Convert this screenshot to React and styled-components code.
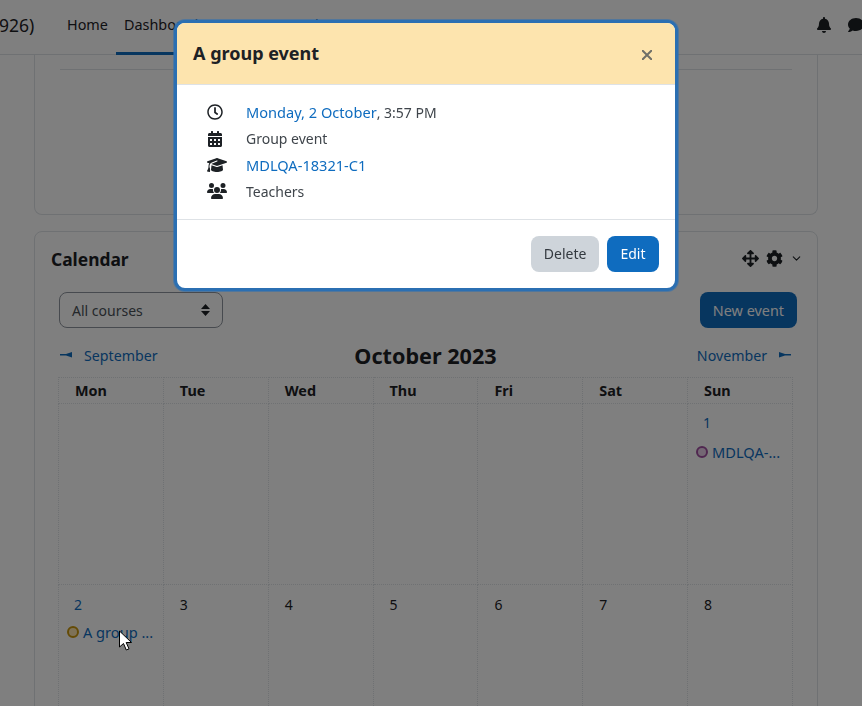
import React from "react";
import styled, { createGlobalStyle } from "styled-components";
import { FaRegClock, FaCalendarAlt, FaBell, FaComment, FaCog, FaArrowsAlt } from "react-icons/fa";
import { FaGraduationCap, FaUsers } from "react-icons/fa6";
import { ChevronDown } from "lucide-react";

const Global = createGlobalStyle`
  html, body {
    margin: 0;
    height: 100%;
    overflow: hidden;
    background: #fff;
  }
  body {
    font-family: "Noto Sans", "Open Sans", sans-serif;
    font-size: 14px;
    color: #1d2125;
  }
  * {
    box-sizing: border-box;
  }
`;

const Page = styled.div`
  height: 706px;
  overflow: hidden;
`;

const Navbar = styled.nav`
  height: 55px;
  box-shadow: inset 0 -1px #dee2e6;
  display: flex;
  align-items: flex-start;
  overflow: hidden;
  white-space: nowrap;
`;
const Brand = styled.span`
  font-size: 17.5px;
  line-height: 50px;
  margin-left: -1px;
  width: 60px;
`;
const NavLink = styled.a`
  padding: 0 8px;
  font-size: 14.4px;
  line-height: 50px;
  height: 55px;
  border-bottom: 3px solid ${(p) => (p.$active ? "#0f6cbf" : "transparent")};
`;
const NavIcons = styled.div`
  margin-left: auto;
  display: flex;
  align-items: center;
  gap: 16px;
  height: 50px;
  margin-right: -2px;
  font-size: 16px;
`;

const Main = styled.main`
  padding: 0 44px 0 34px;
  display: flex;
  flex-direction: column;
  gap: 16px;
`;
const TopCard = styled.section`
  height: 160px;
  border: 1px solid #dee2e6;
  border-top: 0;
  border-radius: 0 0 8px 8px;
  padding: 14px 25px 0;
`;
const Rule = styled.hr`
  margin: 0;
  border: 0;
  border-top: 1px solid #dee2e6;
`;
const Card = styled.section`
  border: 1px solid #dee2e6;
  border-radius: 8px;
  padding: 16px 16px 0;
  height: 600px;
`;
const CardHead = styled.div`
  display: flex;
  align-items: center;
  justify-content: space-between;
  height: 21px;
`;
const CardTitle = styled.h2`
  margin: 0;
  font-size: 17.4px;
  font-weight: 700;
`;
const Tools = styled.div`
  display: flex;
  align-items: center;
  gap: 7px;
  margin-right: -2px;
  font-size: 17px;
`;
const Controls = styled.div`
  margin: 23px 4px 0 8px;
  display: flex;
  justify-content: space-between;
`;
const Select = styled.div`
  width: 164px;
  height: 36px;
  border: 1px solid #8f959e;
  border-radius: 8px;
  padding: 0 12px;
  display: flex;
  align-items: center;
  justify-content: space-between;
  color: #495057;
`;
const Carets = styled.svg`
  width: 9px;
  height: 12px;
`;
const Button = styled.button`
  height: 36px;
  border: 0;
  border-radius: 8px;
  padding: 0 ${(p) => p.$pad}px;
  font: inherit;
  font-size: ${(p) => p.$size || 14}px;
  background: ${(p) => (p.$grey ? "#ced4da" : "#0f6cbf")};
  color: ${(p) => (p.$grey ? "#343a40" : "#fff")};
`;
const MonthNav = styled.div`
  margin: 12px 0 0 9px;
  width: 733px;
  height: 30px;
  display: grid;
  grid-template-columns: 1fr auto 1fr;
  align-items: center;
`;
const MonthLink = styled.a`
  display: flex;
  align-items: center;
  gap: 12px;
  font-size: 14.2px;
  color: #0f6cbf;
  justify-content: ${(p) => (p.$right ? "flex-end" : "flex-start")};
  padding-right: ${(p) => (p.$right ? 2 : 0)}px;
`;
const MonthTitle = styled.h3`
  margin: 0 2px 0 0;
  font-size: 21.6px;
  font-weight: 700;
`;
const Table = styled.table`
  margin: 7px 0 0 7px;
  width: 735px;
  table-layout: fixed;
  border-collapse: collapse;
`;
const HeadCell = styled.th`
  height: 26px;
  padding: 0 0 0 16px;
  border: 1px dotted #dee2e6;
  text-align: left;
  font-size: 14.4px;
  font-weight: 700;
`;
const DayCell = styled.td`
  height: 181px;
  vertical-align: top;
  border: 1px dotted #dee2e6;
  padding: ${(p) => p.$top || 9}px 8px 0;
`;
const DayNum = styled.div`
  height: 20px;
  line-height: 20px;
  padding-left: ${(p) => (p.$link ? 7 : 8)}px;
  color: ${(p) => (p.$link ? "#0f6cbf" : "#1d2125")};
`;
const EventRow = styled.div`
  margin-top: ${(p) => p.$mt}px;
  display: flex;
  align-items: center;
  gap: 4px;
  font-size: 14.6px;
  color: #0f6cbf;
  white-space: nowrap;
`;
const Dot = styled.span`
  flex: none;
  width: 12px;
  height: 12px;
  border-radius: 50%;
  border: 2px solid ${(p) => p.$c};
  background: ${(p) => p.$bg};
`;

const Backdrop = styled.div`
  position: fixed;
  inset: 0;
  background: rgba(0, 0, 0, 0.5);
`;
const Modal = styled.div`
  position: fixed;
  left: 174px;
  top: 20px;
  width: 504px;
  border: 3px solid #2b6fb2;
  border-radius: 11px;
  background: #fff;
  overflow: hidden;
  box-shadow: 0 0 0 1px rgba(43, 111, 178, 0.55);
`;
const ModalHead = styled.header`
  height: 62px;
  background: #fde4ae;
  border-bottom: 1px solid #dee2e6;
  padding: 0 23px 0 16px;
  display: flex;
  align-items: center;
  justify-content: space-between;
`;
const ModalTitle = styled.h4`
  margin: 0 0 1px;
  font-size: 18px;
  font-weight: 700;
  color: #1d2125;
`;
const Close = styled.svg`
  width: 10px;
  height: 10px;
  margin-top: 3px;
  stroke: #6f6f68;
  stroke-width: 2;
`;
const ModalBody = styled.div`
  padding: 14px 16px 14px 28px;
  border-bottom: 1px solid #dee2e6;
`;
const InfoRow = styled.div`
  height: 26.4px;
  display: flex;
  align-items: center;
  color: #3f454b;
`;
const InfoIcon = styled.span`
  width: 41px;
  display: flex;
  padding-left: 2px;
  font-size: 16px;
  color: #1d2125;
`;
const InfoLink = styled.a`
  font-size: 14.6px;
  color: #0f6cbf;
`;
const ModalFoot = styled.footer`
  height: 68px;
  padding: 0 16px;
  display: flex;
  align-items: center;
  justify-content: flex-end;
  gap: 8px;
`;

const Cursor = styled.svg`
  position: fixed;
  left: 118px;
  top: 630px;
  width: 15px;
  height: 22px;
`;

const Arrow = ({ right }) => (
  <svg width="12" height="6" viewBox="0 0 12 6" fill="#0f6cbf">
    {right ? <path d="M0 0l6 2h6v1.500H6L0 5.500z" /> : <path d="M12 0L6 2H0v1.500h6l6 2z" />}
  </svg>
);

const days = ["Mon", "Tue", "Wed", "Thu", "Fri", "Sat", "Sun"];

export default function App() {
  return (
    <Page>
      <Global />
      <Navbar>
        <Brand>926)</Brand>
        <NavLink>Home</NavLink>
        <NavLink $active>Dashboard</NavLink>
        <NavLink>My courses</NavLink>
        <NavLink>Theme</NavLink>
        <NavIcons>
          <FaBell />
          <FaComment />
        </NavIcons>
      </Navbar>
      <Main>
        <TopCard>
          <Rule />
        </TopCard>
        <Card>
          <CardHead>
            <CardTitle>Calendar</CardTitle>
            <Tools>
              <FaArrowsAlt />
              <FaCog />
              <ChevronDown size={13} />
            </Tools>
          </CardHead>
          <Controls>
            <Select>
              All courses
              <Carets viewBox="0 0 9 12" fill="#1d2125">
                <path d="M4.500 0L9 5H0zM0 7h9l-4.500 5z" />
              </Carets>
            </Select>
            <Button $pad={13} $size={14.4}>New event</Button>
          </Controls>
          <MonthNav>
            <MonthLink>
              <Arrow />
              September
            </MonthLink>
            <MonthTitle>October 2023</MonthTitle>
            <MonthLink $right>
              November
              <Arrow right />
            </MonthLink>
          </MonthNav>
          <Table>
            <thead>
              <tr>
                {days.map((d) => (
                  <HeadCell key={d}>{d}</HeadCell>
                ))}
              </tr>
            </thead>
            <tbody>
              <tr>
                {[0, 1, 2, 3, 4, 5].map((i) => (
                  <DayCell key={i} />
                ))}
                <DayCell>
                  <DayNum $link>1</DayNum>
                  <EventRow $mt={8.5}>
                    <Dot $c="#a04fa0" $bg="#e8cfe8" />
                    MDLQA-...
                  </EventRow>
                </DayCell>
              </tr>
              <tr>
                <DayCell $top={10}>
                  <DayNum $link>2</DayNum>
                  <EventRow $mt={6.5}>
                    <Dot $c="#c9960c" $bg="#fde4ae" />
                    A group ...
                  </EventRow>
                </DayCell>
                {[3, 4, 5, 6, 7, 8].map((n) => (
                  <DayCell key={n} $top={10}>
                    <DayNum>{n}</DayNum>
                  </DayCell>
                ))}
              </tr>
            </tbody>
          </Table>
        </Card>
      </Main>
      <Backdrop />
      <Modal>
        <ModalHead>
          <ModalTitle>A group event</ModalTitle>
          <Close viewBox="0 0 10 10">
            <path d="M0 0l10 10M10 0L0 10" />
          </Close>
        </ModalHead>
        <ModalBody>
          <InfoRow>
            <InfoIcon>
              <FaRegClock />
            </InfoIcon>
            <span>
              <InfoLink>Monday, 2 October</InfoLink>, 3:57 PM
            </span>
          </InfoRow>
          <InfoRow>
            <InfoIcon>
              <FaCalendarAlt />
            </InfoIcon>
            Group event
          </InfoRow>
          <InfoRow>
            <InfoIcon>
              <FaGraduationCap size={20} />
            </InfoIcon>
            <InfoLink>MDLQA-18321-C1</InfoLink>
          </InfoRow>
          <InfoRow>
            <InfoIcon>
              <FaUsers size={20} />
            </InfoIcon>
            Teachers
          </InfoRow>
        </ModalBody>
        <ModalFoot>
          <Button $grey $pad={12.5}>Delete</Button>
          <Button $pad={13.5}>Edit</Button>
        </ModalFoot>
      </Modal>
      <Cursor viewBox="0 0 15 22">
        <path d="M1.500 1v16l4-3.500 2.800 6.500 2.700-1.200-2.800-6.300h5.300z" fill="#fff" stroke="#000" strokeWidth="1" />
      </Cursor>
    </Page>
  );
}
